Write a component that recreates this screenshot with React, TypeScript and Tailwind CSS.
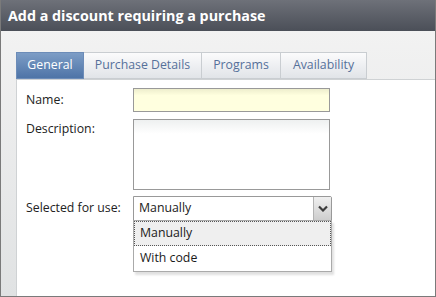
import React from 'react';

const tabs = [
  { label: 'General', w: 'w-[68px]' },
  { label: 'Purchase Details', w: 'w-[118px]' },
  { label: 'Programs', w: 'w-[79px]' },
  { label: 'Availability', w: 'w-[86px]' },
];

const font = { fontFamily: '"Open Sans", "Noto Sans", sans-serif' };

const App: React.FC = () => {
  return (
    <div className="w-[436px] h-[297px] flex flex-col border-x border-b border-[#7a7a7a] bg-[#f2f2f2]" style={font}>
      <div className="h-[31px] shrink-0 flex items-center px-[7px] bg-gradient-to-b from-[#6e7179] to-[#4b4f58]">
        <h1 className="text-[14.3px] font-bold text-white">Add a discount requiring a purchase</h1>
      </div>

      <div className="flex-1 flex flex-col pt-[21px] pl-[15px] bg-gradient-to-b from-[#f2f2f2] to-[#e0e2e3]">
        <div className="h-[27px] flex shrink-0">
          {tabs.map((t, i) => (
            <div
              key={t.label}
              className={
                i === 0
                  ? `${t.w} flex items-center justify-center text-[12.3px] text-white bg-gradient-to-b from-[#7d9dc6] to-[#4e74a7] border border-[#6c8cb8]`
                  : `${t.w} flex items-center justify-center text-[12.3px] text-[#56709a] bg-gradient-to-b from-[#fbfbfc] to-[#e1e4e8] border border-l-0 border-[#c9cdd1]`
              }
            >
              {t.label}
            </div>
          ))}
        </div>

        <div className="flex-1 bg-white border-l border-t border-[#cfd2d4] pl-[9px] pt-[8px] text-[12.3px] text-[#222]">
          <div className="flex items-center h-[24px]">
            <span className="w-[107px]">Name:</span>
            <div className="w-[197px] h-[24px] border border-[#999] bg-gradient-to-b from-[#eeeecd] via-[#ffffdf] via-30% to-[#ffffdf]" />
          </div>

          <div className="flex mt-[7px]">
            <span className="w-[107px] pt-[1px]">Description:</span>
            <div className="w-[197px] h-[71px] border border-[#999] bg-gradient-to-b from-[#eef0f0] via-white via-20% to-white" />
          </div>

          <div className="flex items-center mt-[6px] h-[25px]">
            <span className="w-[107px]">Selected for use:</span>
            <div className="relative w-[199px] h-[25px]">
              <div className="h-full flex border border-[#999] rounded-tr-[2px] bg-white">
                <span className="flex-1 flex items-center pl-[5px] text-[#1a1a1a]">Manually</span>
                <div className="w-[18px] border-l border-[#b3b3b3] flex items-center justify-center bg-gradient-to-b from-[#f0f0f0] to-[#cdcdcd]">
                  <svg width="10" height="7" viewBox="0 0 10 7">
                    <path d="M1 1.5 L5 5.5 L9 1.5" fill="none" stroke="#3c3c3c" strokeWidth="2.2" />
                  </svg>
                </div>
              </div>

              <div className="absolute left-0 top-[24px] w-[199px] bg-white border border-[#aaa] shadow-[2px_3px_2px_rgba(0,0,0,0.12)] text-[#1a1a1a]">
                <div className="h-[25px] flex items-center pl-[5px] bg-[#efefef] border border-dotted border-[#555]">Manually</div>
                <div className="h-[25px] flex items-center pl-[6px]">With code</div>
              </div>
            </div>
          </div>
        </div>
      </div>
    </div>
  );
};

export default App;
